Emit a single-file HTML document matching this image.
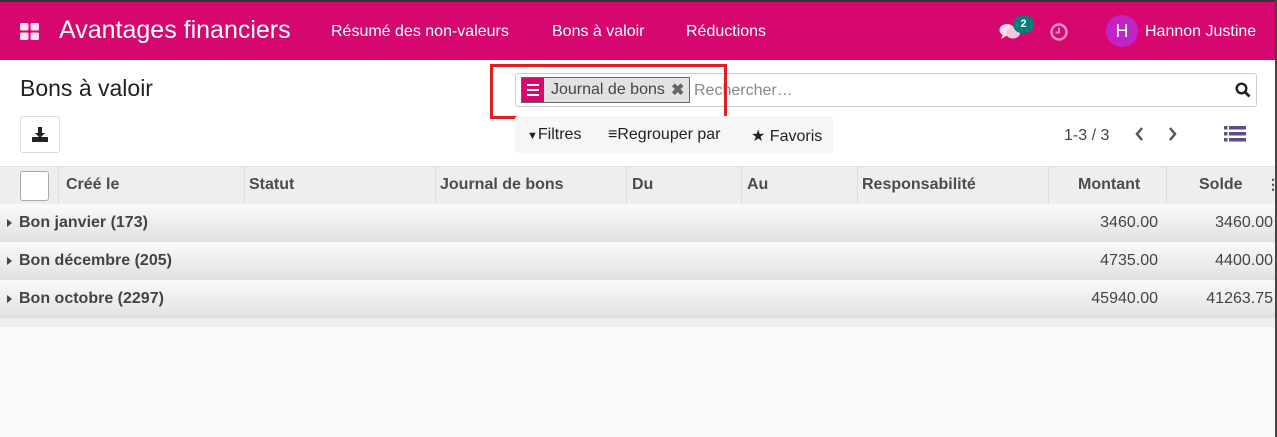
<!DOCTYPE html>
<html><head><meta charset="utf-8"><style>
*{box-sizing:border-box;margin:0;padding:0}
body{width:1277px;height:437px;overflow:hidden;font-family:"Liberation Sans",sans-serif;background:#f8f9fa;position:relative;color:#212529}
.abs{position:absolute}
.nav{left:0;top:0;width:1277px;height:60px;background:#d6076f;border-top:2px solid #333}
.nav .t{color:#fff;white-space:nowrap}
.rb{right:0;top:0;width:2px;height:437px;background:#444}
.hd{left:0;top:166px;width:1275px;height:38px;background:#eee;border-top:1px solid #e2e2e2}
.hd span{position:absolute;top:9px;font-weight:bold;font-size:16px;color:#4c4c4c}
.sep{position:absolute;top:0;width:1px;height:38px;background:#ddd}
.gr{left:0;width:1275px;height:38px;background:linear-gradient(#fafafa,#e2e2e2);border-bottom:1px solid #ddd;font-size:16px;color:#444}
.gr b{position:absolute;left:19px;top:10px}
.gr .n{position:absolute;top:10px;text-align:right}
.tri{position:absolute;left:7px;top:15px;border-left:5px solid #444;border-top:4px solid transparent;border-bottom:4px solid transparent}
</style></head><body>
<div class="abs" style="left:0;top:60px;width:1275px;height:106px;background:#fff"></div>
<div class="abs nav">
 <svg class="abs" style="left:20px;top:21px" width="20" height="18"><rect x="0" y="0" width="8.5" height="7.5" rx="1.5" fill="#fde"/><rect x="10.5" y="0" width="8.5" height="7.5" rx="1.5" fill="#fde"/><rect x="0" y="9.5" width="8.5" height="7.5" rx="1.5" fill="#fde"/><rect x="10.5" y="9.5" width="8.5" height="7.5" rx="1.5" fill="#fde"/></svg>
 <div class="abs t" style="left:59px;top:14px;font-size:25px">Avantages financiers</div>
 <div class="abs t" style="left:331px;top:21px;font-size:16px">Résumé des non-valeurs</div>
 <div class="abs t" style="left:552px;top:21px;font-size:16px">Bons à valoir</div>
 <div class="abs t" style="left:686px;top:21px;font-size:16px">Réductions</div>
 <svg class="abs" style="left:999px;top:20px" width="24" height="20"><ellipse cx="8" cy="8" rx="7.5" ry="6" fill="#fde"/><path d="M4 12 L2 17 L9 13Z" fill="#fde"/><ellipse cx="14" cy="11" rx="7" ry="5.5" fill="#f7c6dd"/></svg>
 <div class="abs" style="left:1013px;top:14px;width:21px;height:17px;border-radius:9px;background:#00807a;color:#fff;font-size:11px;font-weight:bold;text-align:center;line-height:17px">2</div>
 <svg class="abs" style="left:1049px;top:20px" width="20" height="20"><circle cx="10" cy="10" r="7.5" fill="none" stroke="#f08fbf" stroke-width="2.5"/><path d="M10 5.5V10.5H6.5" fill="none" stroke="#f08fbf" stroke-width="2"/></svg>
 <div class="abs" style="left:1106px;top:13px;width:32px;height:32px;border-radius:50%;background:#c223c6;color:#fff;font-size:18px;text-align:center;line-height:32px">H</div>
 <div class="abs t" style="left:1145px;top:21px;font-size:16px">Hannon Justine</div>
</div>
<div class="abs rb"></div>
<div class="abs" style="left:20px;top:75px;font-size:23px;color:#222">Bons à valoir</div>
<div class="abs" style="left:20px;top:116px;width:40px;height:37px;border:1px solid #ddd;border-radius:3px;background:#fff">
 <svg class="abs" style="left:11px;top:10px" width="16" height="15"><path d="M6 0h4v6h3l-5 5-5-5h3z" fill="#222"/><rect x="0" y="10" width="16" height="5" fill="#222"/></svg>
</div>
<div class="abs" style="left:515px;top:73px;width:742px;height:34px;border:1px solid #ccc;border-radius:3px;background:#fff"></div>
<div class="abs" style="left:521px;top:77px;width:169px;height:26px;border:1px solid #666;background:#e2e2e2"></div>
<div class="abs" style="left:522px;top:78px;width:22px;height:24px;background:#d6076f">
 <div class="abs" style="left:5px;top:6px;width:12px;height:2px;background:#fff"></div><div class="abs" style="left:5px;top:11px;width:12px;height:2px;background:#fff"></div><div class="abs" style="left:5px;top:16px;width:12px;height:2px;background:#fff"></div>
</div>
<div class="abs" style="left:551px;top:81px;font-size:16px;color:#444">Journal de bons</div>
<div class="abs" style="left:671px;top:80px;font-size:16px;color:#666;font-weight:bold">✖</div>
<div class="abs" style="left:694px;top:82px;font-size:16px;color:#888">Rechercher…</div>
<svg class="abs" style="left:1235px;top:82px" width="16" height="16"><circle cx="6.5" cy="6.5" r="4.8" fill="none" stroke="#222" stroke-width="2.4"/><path d="M10 10l4.5 4.5" stroke="#222" stroke-width="2.8"/></svg>
<div class="abs" style="left:490px;top:64px;width:237px;height:55px;border:3px solid #e01f1f"></div>
<div class="abs" style="left:515px;top:116px;width:318px;height:37px;background:#f5f6f8;border-radius:3px"></div>
<div class="abs" style="left:527px;top:126px;font-size:16px;color:#222"><span style="font-size:11px">▼</span>Filtres</div>
<div class="abs" style="left:608px;top:126px;font-size:16px;color:#222">≡Regrouper par</div>
<div class="abs" style="left:751px;top:126px;font-size:16px;color:#222">★ Favoris</div>
<div class="abs" style="left:1064px;top:127px;font-size:16px;color:#444">1-3 / 3</div>
<svg class="abs" style="left:1133px;top:126px" width="50" height="16"><path d="M9 2L4 8l5 6" fill="none" stroke="#555" stroke-width="2.5"/><path d="M37 2l5 6-5 6" fill="none" stroke="#555" stroke-width="2.5"/></svg>
<svg class="abs" style="left:1224px;top:125px" width="22" height="18"><g fill="#5f4e85"><rect x="0" y="1" width="3.5" height="3.5"/><rect x="5" y="1" width="17" height="3.5"/><rect x="0" y="7" width="3.5" height="3.5"/><rect x="5" y="7" width="17" height="3.5"/><rect x="0" y="13" width="3.5" height="3.5"/><rect x="5" y="13" width="17" height="3.5"/></g></svg>
<div class="abs hd">
 <div class="abs" style="left:20px;top:4px;width:29px;height:30px;border:1px solid #aaa;border-radius:3px;background:#fff"></div>
 <div class="sep" style="left:58px"></div><span style="left:66px">Créé le</span>
 <div class="sep" style="left:244px"></div><span style="left:249px">Statut</span>
 <div class="sep" style="left:435px"></div><span style="left:440px">Journal de bons</span>
 <div class="sep" style="left:626px"></div><span style="left:632px">Du</span>
 <div class="sep" style="left:741px"></div><span style="left:747px">Au</span>
 <div class="sep" style="left:857px"></div><span style="left:862px">Responsabilité</span>
 <div class="sep" style="left:1048px"></div><span style="left:1078px">Montant</span>
 <div class="sep" style="left:1166px"></div><span style="left:1199px">Solde</span>
 <span style="left:1266px;font-size:14px">⋮</span>
</div>
<div class="abs gr" style="top:204px"><i class="tri"></i><b>Bon janvier (173)</b><span class="n" style="right:117px">3460.00</span><span class="n" style="right:2px">3460.00</span></div>
<div class="abs gr" style="top:242px"><i class="tri"></i><b>Bon décembre (205)</b><span class="n" style="right:117px">4735.00</span><span class="n" style="right:2px">4400.00</span></div>
<div class="abs gr" style="top:280px"><i class="tri"></i><b>Bon octobre (2297)</b><span class="n" style="right:117px">45940.00</span><span class="n" style="right:2px">41263.75</span></div>
<div class="abs" style="left:0;top:318px;width:1275px;height:9px;background:#eeeeee"></div>
</body></html>
